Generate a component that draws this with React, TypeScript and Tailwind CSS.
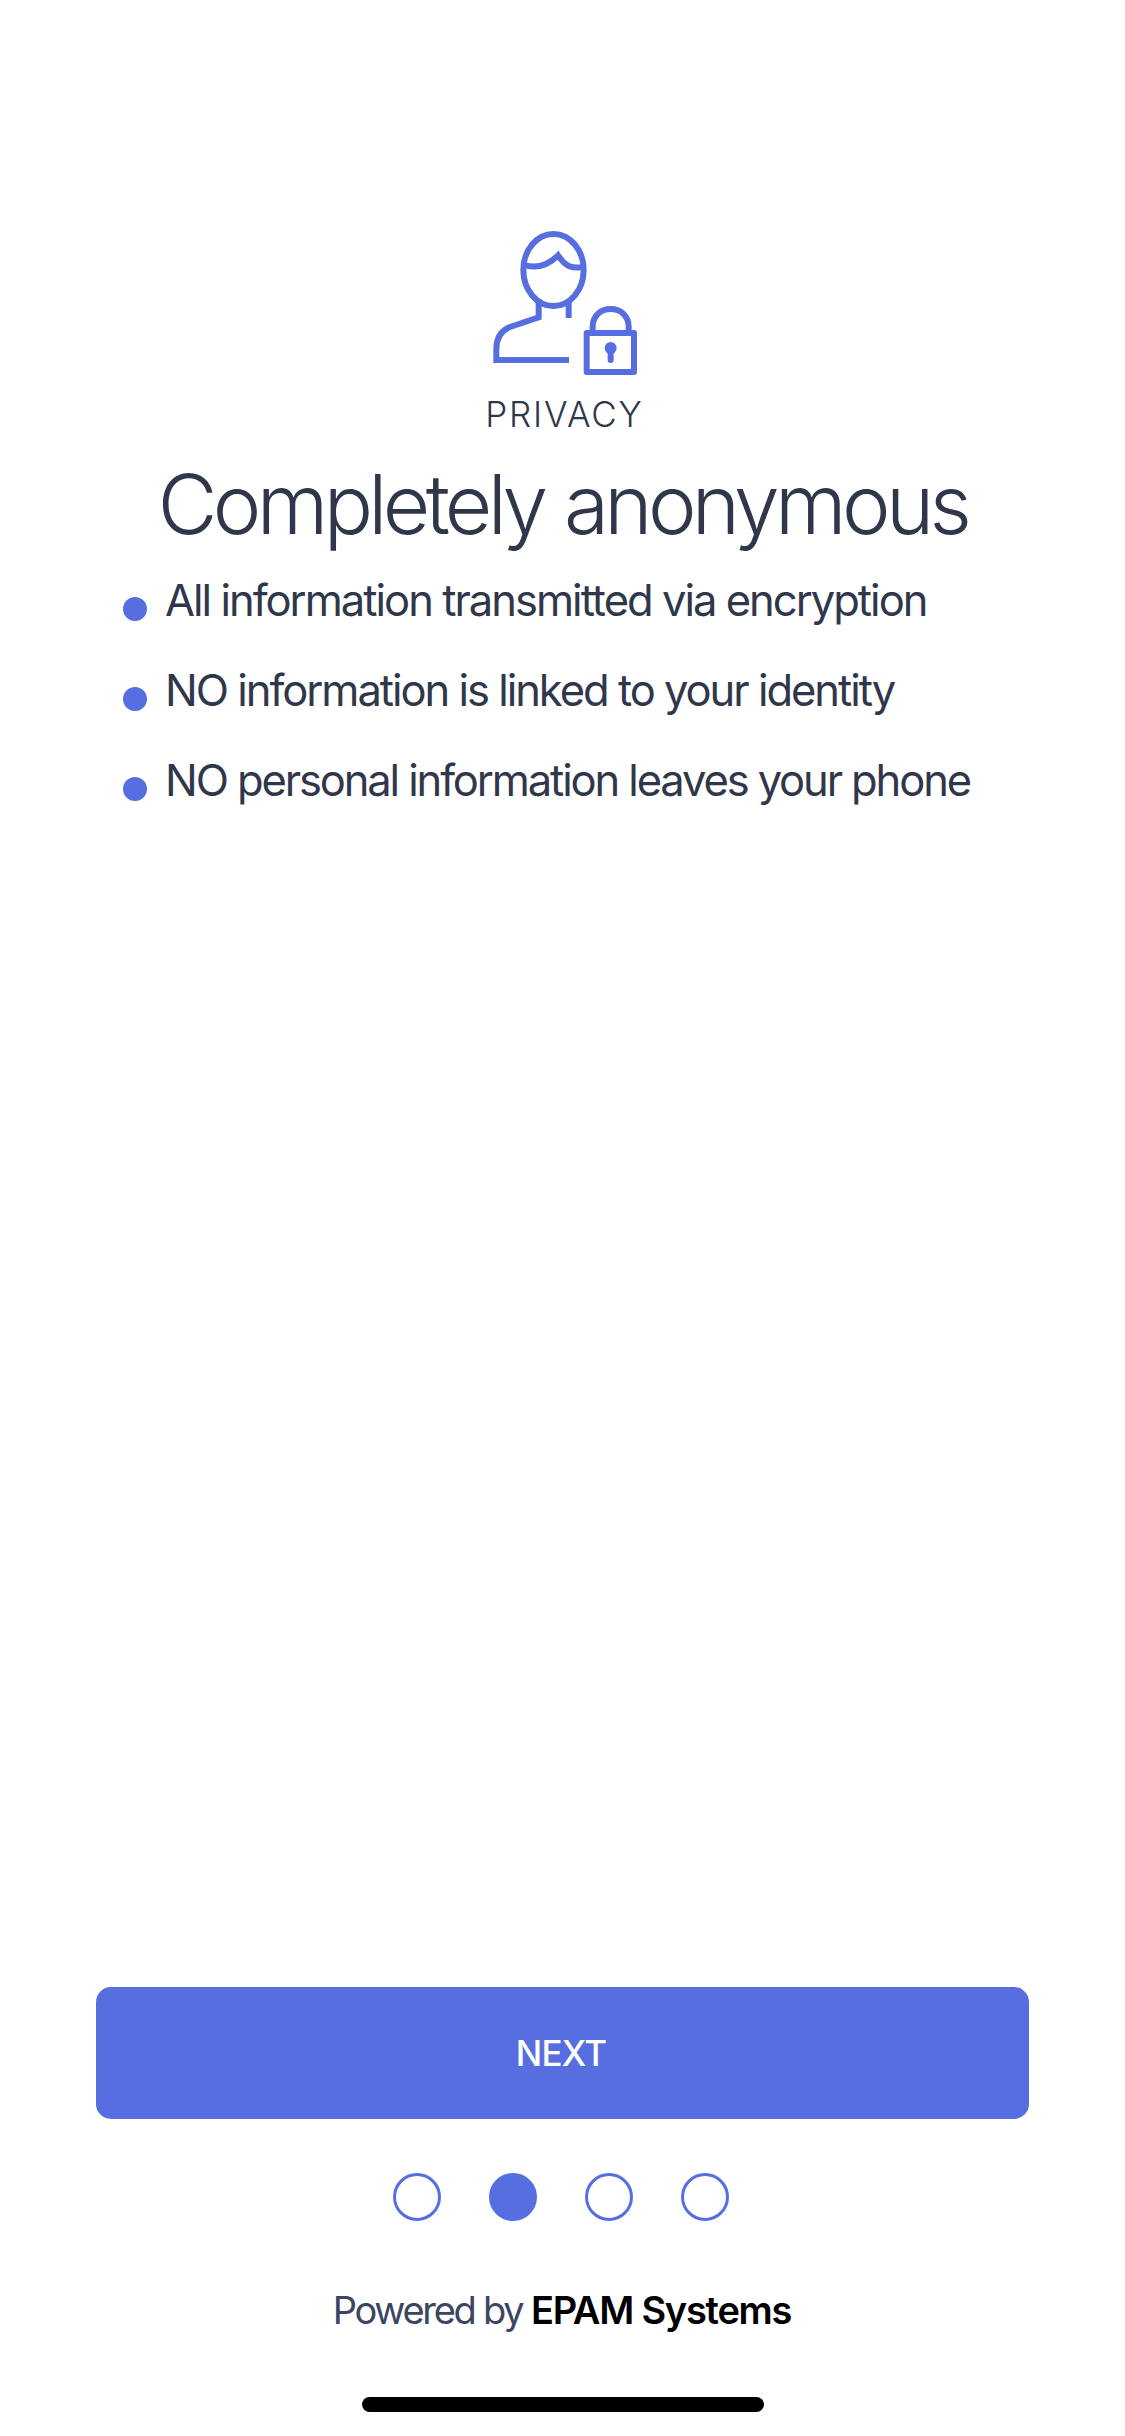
const bullets = [
  { text: "All information transmitted via encryption", tracking: "tracking-[-1.98px]" },
  { text: "NO information is linked to your identity", tracking: "tracking-[-2.02px]" },
  { text: "NO personal information leaves your phone", tracking: "tracking-[-2.12px]" },
];

const steps = [1, 2, 3, 4];
const currentStep = 2;

function PrivacyIcon() {
  return (
    <svg
      className="h-[147px] w-[151px] shrink-0"
      viewBox="21 27 453 441"
      fill="none"
      stroke="#576EE0"
      strokeWidth="18"
    >
      <ellipse cx="220.5" cy="150" rx="90.5" ry="108" />
      <path d="M136 136Q189 151 234 106C258 142 276 145 306 142" />
      <path d="M176 244V292L90 321Q49 337 49 388V420H267" />
      <path d="M266 243V294" />
      <rect x="320" y="339" width="142" height="117" strokeLinejoin="round" />
      <path d="M338 336V320C338 290 360 267 392 267S446 290 446 320V336" />
      <circle cx="392" cy="384" r="18" fill="#576EE0" stroke="none" />
      <path d="M392 384V420" strokeLinecap="round" />
    </svg>
  );
}

export default function App() {
  return (
    <main className="flex h-[2436px] w-[1125px] flex-col items-center overflow-hidden bg-white pt-[229px] font-['Inter',sans-serif] text-[#30374B]">
      <PrivacyIcon />
      <p className="mt-[13px] pl-1 text-[35px] leading-[50px] font-light tracking-[1.8px] whitespace-nowrap">
        PRIVACY
      </p>
      <h1 className="mt-4 text-[82px] leading-[100px] font-light tracking-[-4.65px] whitespace-nowrap [word-spacing:2px]">
        Completely anonymous
      </h1>
      <ul className="mt-1 flex w-full flex-col pl-[123px]">
        {bullets.map(({ text, tracking }) => (
          <li key={text} className="flex h-[90px] items-start whitespace-nowrap">
            <span className="mt-[38px] mr-[18px] h-6 w-6 rounded-full bg-[#576EE0]" />
            <span className={`mt-[11px] text-[43.5px] leading-[60px] ${tracking}`}>{text}</span>
          </li>
        ))}
      </ul>
      <button className="mt-auto h-[132px] w-[933px] shrink-0 rounded-[15px] bg-[#576EE0] pr-[3px] text-[35px] font-medium tracking-[-0.8px] text-white">
        NEXT
      </button>
      <div className="mt-[54px] flex gap-12 pr-[3px]">
        {steps.map((step) => (
          <span
            key={step}
            className={
              step === currentStep
                ? "h-12 w-12 rounded-full bg-[#576EE0]"
                : "h-12 w-12 rounded-full border-[3px] border-[#576EE0]"
            }
          />
        ))}
      </div>
      <p className="mt-[59px] pr-px text-[38px] leading-[60px] whitespace-nowrap text-[#3B4560]">
        <span className="tracking-[-2.3px]">Powered by</span>{" "}
        <span className="-ml-0.5 font-semibold tracking-[-1.25px] text-black">EPAM Systems</span>
      </p>
      <div className="mt-[57px] mb-6 ml-px h-[15px] w-[402px] shrink-0 rounded-full bg-black" />
    </main>
  );
}
